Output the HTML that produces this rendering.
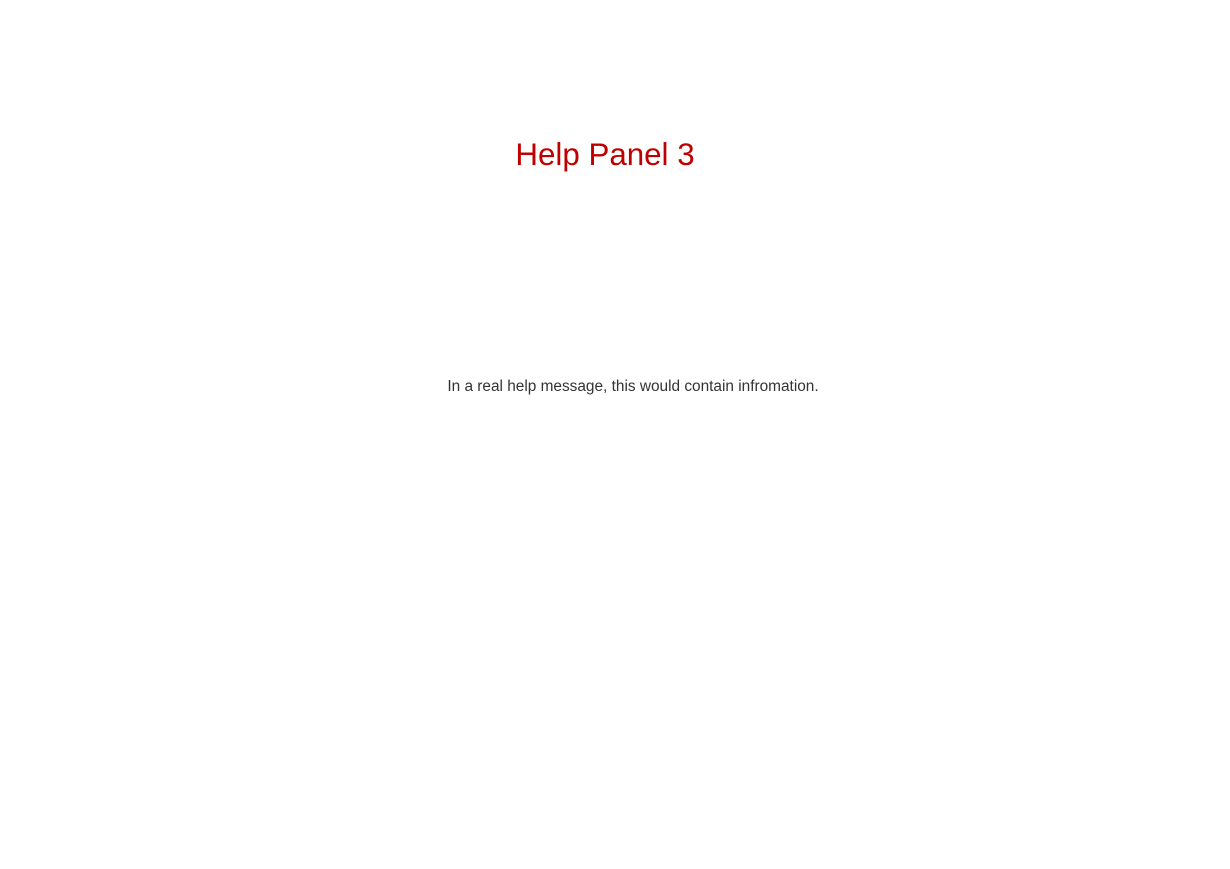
<!DOCTYPE html>
<html><head><meta charset="utf-8"><style>
html,body{margin:0;padding:0;background:#fff;width:1230px;height:869px;overflow:hidden;font-family:"Liberation Sans",Arial,sans-serif}
.t{position:absolute;left:405px;width:400px;top:135px;text-align:center;color:#c00000;font-size:31.3px;line-height:40px}
.p{position:absolute;left:333px;width:600px;top:377px;text-align:center;color:#333;font-size:15.4px;line-height:20px}
</style></head><body>
<div class="t">Help Panel 3</div>
<div class="p">In a real help message, this would contain infromation.</div>
</body></html>
